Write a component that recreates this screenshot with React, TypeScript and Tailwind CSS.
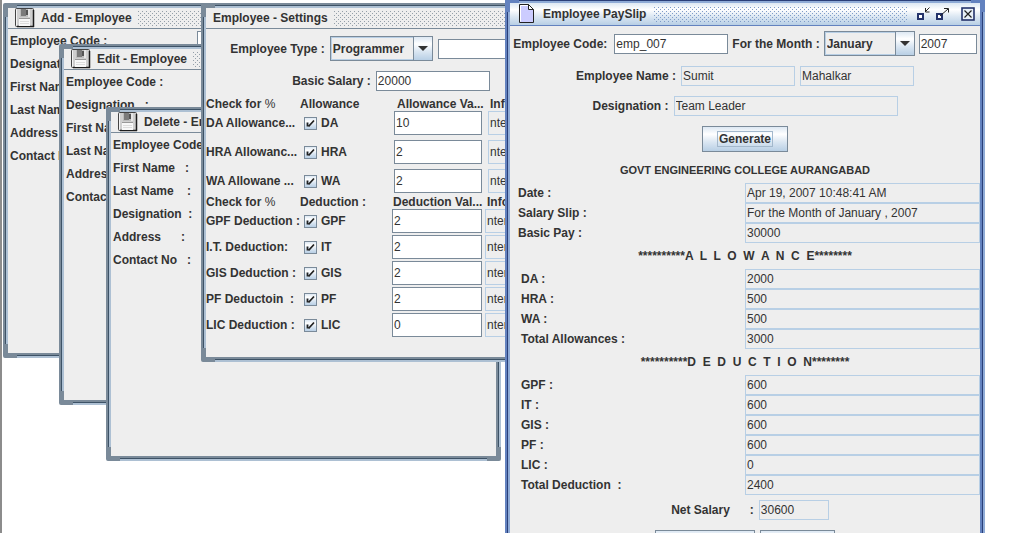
import { ReactNode, useId } from 'react';
import clsx from 'clsx';

interface FrameProps {
  title: string;
  className: string;
  active?: boolean;
  icon?: ReactNode;
  children: ReactNode;
}

const allowances = [
  { label: 'DA Allowance...', name: 'DA', value: '10' },
  { label: 'HRA Allowanc...', name: 'HRA', value: '2' },
  { label: 'WA Allowane ...', name: 'WA', value: '2' },
];

const deductions = [
  { label: 'GPF Deduction :', name: 'GPF', value: '2' },
  { label: 'I.T. Deduction:', name: 'IT', value: '2' },
  { label: 'GIS Deduction :', name: 'GIS', value: '2' },
  { label: 'PF Deductoin  :', name: 'PF', value: '2' },
  { label: 'LIC Deduction :', name: 'LIC', value: '0' },
];

const slipHeader = [
  ['Date :', 'Apr 19, 2007 10:48:41 AM'],
  ['Salary Slip :', 'For the Month of January , 2007'],
  ['Basic Pay :', '30000'],
];

const slipAllowances = [
  ['DA :', '2000'],
  ['HRA :', '500'],
  ['WA :', '500'],
  ['Total Allowances :', '3000'],
];

const slipDeductions = [
  ['GPF :', '600'],
  ['IT :', '600'],
  ['GIS :', '600'],
  ['PF :', '600'],
  ['LIC :', '0'],
  ['Total Deduction  :', '2400'],
];

const fieldStyle = 'border border-[#7a8a99] bg-white px-px font-normal';
const lockedStyle = 'border border-[#b8cfe5] bg-[#eeeeee] px-px font-normal';
const oceanFill = 'bg-[linear-gradient(#dde8f3,#ffffff_30%,#dde8f3_60%,#b8cfe5)]';

function FloppyIcon() {
  return (
    <svg width="20" height="20" viewBox="0 0 20 20">
      <rect x="0.5" y="0.5" width="18" height="18" rx="1" fill="#cfcfcf" stroke="#444" />
      <path d="M1.500 1.500v16" stroke="#f4f4f4" />
      <path d="M18.500 2v17M2 18.500h17" stroke="#1c1c1c" strokeWidth="1.500" />
      <rect x="5" y="1" width="10" height="8" fill="#bcbcbc" />
      <rect x="6" y="1" width="5" height="7" fill="#7b7b7b" />
      <rect x="11" y="2" width="2" height="5" fill="#555" />
      <rect x="13" y="1" width="2" height="8" fill="#e6e6e6" />
      <rect x="4" y="11" width="11" height="7" fill="#f8f8f8" />
      <path d="M4 10.500h11" stroke="#999" />
      <path d="M5 13.500h9M5 15.500h9" stroke="#ddd" />
    </svg>
  );
}

function PageIcon() {
  return (
    <svg width="16" height="20" viewBox="0 0 16 20">
      <path d="M0.500 0.500h9l5 5v13h-14z" fill="#ccccff" stroke="#222" />
      <path d="M1.500 17.500v-16h8" fill="none" stroke="#fff" />
      <path d="M9.500 0.500v5h5z" fill="#fff" stroke="#222" />
    </svg>
  );
}

// Metal frame edge: a dark and a light line running between the corners
function FrameEdges({ active }: { active?: boolean }) {
  const tone = active ? 'border-t-[#2a3f78] border-b-[#8fabd6]' : 'border-t-[#3d5266] border-b-[#adc0d3]';
  const sideTone = active ? 'border-l-[#2a3f78] border-r-[#8fabd6]' : 'border-l-[#3d5266] border-r-[#adc0d3]';
  return (
    <>
      <span className={clsx('absolute inset-x-[9px] -top-[3px] h-[3px] border-t border-b-2', tone)} />
      <span className={clsx('absolute inset-x-[9px] -bottom-[5px] h-[3px] border-t border-b-2', tone)} />
      <span className={clsx('absolute inset-y-[9px] -left-[3px] w-[3px] border-l border-r-2', sideTone)} />
      <span className={clsx('absolute inset-y-[9px] -right-[5px] w-[3px] border-l border-r-2', sideTone)} />
    </>
  );
}

function Frame({ title, className, active, icon, children }: FrameProps) {
  return (
    <section
      className={clsx(
        'absolute flex flex-col rounded-[2px] border-[5px] bg-[#eeeeee]',
        active ? 'border-[#6382bf]' : 'border-[#7a8a99]',
        className
      )}
    >
      <FrameEdges active={active} />
      <header
        className={clsx(
          'flex shrink-0 items-center border-b',
          active
            ? 'h-[23px] gap-2 border-[#6382bf] pr-[5px] pl-[9px]'
            : 'h-[21px] gap-[6px] border-[#7a8a99] pl-[7px]',
          active && oceanFill
        )}
      >
        {icon}
        <h2 className="whitespace-nowrap text-[12px] font-bold">{title}</h2>
        <div
          className={clsx(
            'h-[15px] flex-1 bg-size-[4px_4px] bg-position-[0_0,2px_2px]',
            active
              ? 'bg-[conic-gradient(from_270deg_at_1px_1px,#7f9cc8_90deg,transparent_0),conic-gradient(from_270deg_at_1px_1px,#7f9cc8_90deg,transparent_0)]'
              : 'bg-[conic-gradient(from_270deg_at_1px_1px,#949fa9_90deg,transparent_0),conic-gradient(from_270deg_at_1px_1px,#949fa9_90deg,transparent_0)]'
          )}
        />
        {active && <FrameButtons />}
      </header>
      {children}
    </section>
  );
}

function FrameButtons() {
  return (
    <div className="flex items-center gap-1">
      <button type="button" aria-label="Minimize">
        <svg width="16" height="16" viewBox="0 0 16 16" fill="none">
          <rect x="3" y="8" width="5" height="5" fill="#fff" stroke="#24336b" strokeWidth="2" />
          <path d="M14.500 1.500l-4 4M10.500 2v4h4" stroke="#222" />
        </svg>
      </button>
      <button type="button" aria-label="Maximize">
        <svg width="16" height="16" viewBox="0 0 16 16" fill="none">
          <rect x="2" y="8" width="5" height="5" fill="#fff" stroke="#24336b" strokeWidth="2" />
          <path d="M5 10l8-7M9 2.500h4.500v4" stroke="#222" />
        </svg>
      </button>
      <button type="button" aria-label="Close" className="ml-[6px]">
        <svg width="14" height="14" viewBox="0 0 14 14" fill="none">
          <rect x="1" y="1" width="12" height="12" fill="#e8f0f8" stroke="#24336b" strokeWidth="1.600" />
          <path d="M3.500 3.500l7 7M10.500 3.500l-7 7" stroke="#222" strokeWidth="1.200" />
        </svg>
      </button>
    </div>
  );
}

function EmployeeForm({ labels }: { labels: string[] }) {
  const id = useId();
  return (
    <form className="flex flex-col pl-[2px]">
      {labels.map((label, i) => (
        <div key={label} className="flex h-[23px] items-center">
          <label htmlFor={`${id}-${i}`} className="w-[187px] shrink-0 whitespace-pre">
            {label}
          </label>
          <input id={`${id}-${i}`} className={clsx(fieldStyle, 'h-[20px] w-[114px]')} />
        </div>
      ))}
    </form>
  );
}

function Combo({ id, value, className }: { id: string; value: string; className: string }) {
  return (
    <div className={clsx('grid h-[25px] grid-cols-[1fr_19px] border border-[#7a8a99]', className)}>
      <select
        id={id}
        defaultValue={value}
        className="col-span-2 col-start-1 row-start-1 appearance-none border border-[#b8cfe5] bg-[#eeeeee] pl-px font-bold outline-none"
      >
        <option>{value}</option>
      </select>
      <span
        className={clsx(
          'pointer-events-none col-start-2 row-start-1 flex items-center justify-center border-l border-[#7a8a99]',
          oceanFill
        )}
      >
        <svg width="10" height="5" viewBox="0 0 10 5">
          <path d="M0 0h10L5 5z" fill="#333" />
        </svg>
      </span>
    </div>
  );
}

interface RateTableProps {
  rows: { label: string; name: string; value: string }[];
  heading: string;
  valueHeading: string;
  wide?: boolean;
}

function RateTable({ rows, heading, valueHeading, wide }: RateTableProps) {
  return (
    <table className="w-full table-fixed border-collapse text-left">
      <colgroup>
        <col className="w-[94px]" />
        <col className={wide ? 'w-[94px]' : 'w-[92px]'} />
        <col className={wide ? 'w-[94px]' : 'w-[93px]'} />
        <col />
      </colgroup>
      <thead>
        <tr className="h-[14px] leading-[14px] whitespace-nowrap">
          <th>
            Check for <span className="font-normal">%</span>
          </th>
          <th>{heading}</th>
          <th className={wide ? 'pl-[3px]' : 'pl-px'}>{valueHeading}</th>
          <th className="pl-[2px]">Information</th>
        </tr>
      </thead>
      <tbody>
        {rows.map((row) => (
          <tr key={row.name} className={clsx('align-top leading-[24px]', wide ? 'h-[29px] last:h-[26px]' : 'h-[26px]')}>
            <th className="overflow-hidden whitespace-pre">{row.label}</th>
            <td>
              <label className="flex items-center gap-1 pl-1 font-bold">
                <input type="checkbox" defaultChecked className="peer sr-only" />
                <span className={clsx('flex size-[13px] items-center justify-center border border-[#7a8a99]', oceanFill)}>
                  <svg width="9" height="9" viewBox="0 0 9 9" fill="none">
                    <path d="M1.500 3.500v4M2.500 7.500L8 1.500" stroke="#222" strokeWidth="1.800" />
                  </svg>
                </span>
                {row.name}
              </label>
            </td>
            <td>
              <input
                aria-label={`${row.name} value`}
                defaultValue={row.value}
                className={clsx(fieldStyle, 'block h-[24px]', wide ? 'w-[88px]' : 'w-[90px]')}
              />
            </td>
            <td>
              <input
                aria-label={`${row.name} information`}
                readOnly
                value="nter value"
                className={clsx(lockedStyle, 'block h-[24px] w-full')}
              />
            </td>
          </tr>
        ))}
      </tbody>
    </table>
  );
}

function SlipRows({ rows, className }: { rows: string[][]; className: string }) {
  const id = useId();
  return (
    <div className="flex flex-col">
      {rows.map(([label, value], i) => (
        <div key={label} className={clsx('flex h-5 items-center', className)}>
          <label htmlFor={`${id}-${i}`} className="flex-1 whitespace-pre">
            {label}
          </label>
          <input id={`${id}-${i}`} readOnly value={value} className={clsx(lockedStyle, 'h-5 w-[235px]')} />
        </div>
      ))}
    </div>
  );
}

function SlipTitle({ children }: { children: ReactNode }) {
  return <h3 className="flex h-[26px] items-center justify-center font-bold whitespace-pre">{children}</h3>;
}

function SettingsFrame() {
  return (
    <Frame title="Employee - Settings" className="top-[3px] left-[201px] h-[359px] w-[380px]">
      <div className="flex items-center justify-center gap-[5px] pt-[7px]">
        <label htmlFor="type">Employee Type :</label>
        <Combo id="type" value="Programmer" className="w-[103px]" />
        <input aria-label="New type" className={clsx(fieldStyle, 'h-[20px] w-[114px]')} />
      </div>
      <div className="flex items-center justify-center gap-[5px] pt-[10px] pb-[6px]">
        <label htmlFor="basic">Basic Salary :</label>
        <input id="basic" defaultValue="20000" className={clsx(fieldStyle, 'h-[20px] w-[114px]')} />
      </div>
      <RateTable rows={allowances} heading="Allowance" valueHeading="Allowance Va..." wide />
      <RateTable rows={deductions} heading="Deduction :" valueHeading="Deduction Val..." />
    </Frame>
  );
}

function PaySlipFrame() {
  return (
    <Frame title="Employee PaySlip" className="-top-[2px] left-[505px] w-[480px]" active icon={<PageIcon />}>
      <div className="flex items-center justify-center gap-1 pt-[5px]">
        <label htmlFor="code" className="mr-[3px]">Employee Code:</label>
        <input id="code" defaultValue="emp_007" className={clsx(fieldStyle, 'h-[20px] w-[114px]')} />
        <label htmlFor="month">For the Month :</label>
        <Combo id="month" value="January" className="w-[91px]" />
        <input aria-label="Year" defaultValue="2007" className={clsx(fieldStyle, 'h-[20px] w-[58px]')} />
      </div>
      <div className="flex items-center justify-center gap-[5px] pt-[10px]">
        <label htmlFor="first">Employee Name :</label>
        <input id="first" readOnly value="Sumit" className={clsx(lockedStyle, 'h-[20px] w-[114px]')} />
        <input aria-label="Last name" readOnly value="Mahalkar" className={clsx(lockedStyle, 'h-[20px] w-[114px]')} />
      </div>
      <div className="flex items-center justify-center gap-[5px] pt-[10px]">
        <label htmlFor="designation">Designation :</label>
        <input id="designation" readOnly value="Team Leader" className={clsx(lockedStyle, 'h-[20px] w-[224px]')} />
      </div>
      <div className="flex justify-center pt-[10px]">
        <button type="button" className={clsx('h-[26px] border border-[#7a8a99] px-[14px] font-bold', oceanFill)}>
          <span className="border border-[#a3b8cc] px-px">Generate</span>
        </button>
      </div>
      <h3 className="flex h-[31px] items-center justify-center pt-[5px] text-[11px] font-bold">
        GOVT ENGINEERING COLLEGE AURANGABAD
      </h3>
      <SlipRows rows={slipHeader} className="pl-2" />
      <SlipTitle>{'**********A  L  L  O  W  A  N  C  E********'}</SlipTitle>
      <SlipRows rows={slipAllowances} className="pl-[11px]" />
      <SlipTitle>{'**********D  E  D  U  C  T  I  O  N********'}</SlipTitle>
      <SlipRows rows={slipDeductions} className="pl-[11px]" />
      <div className="flex items-center justify-center gap-[5px] pt-[5px] pl-[10px]">
        <label htmlFor="net" className="whitespace-pre">{'Net Salary      :'}</label>
        <input id="net" readOnly value="30600" className={clsx(lockedStyle, 'h-[20px] w-[70px]')} />
      </div>
      <div className="flex justify-center gap-[5px] pt-[10px] pb-[5px]">
        <button type="button" aria-label="Print" className={clsx('h-[26px] w-[100px] border border-[#7a8a99]', oceanFill)} />
        <button type="button" aria-label="Close" className={clsx('h-[26px] w-[75px] border border-[#7a8a99]', oceanFill)} />
      </div>
    </Frame>
  );
}

export default function App() {
  return (
    <main className="relative h-screen overflow-hidden border-l-2 border-l-[#8c8c8c] bg-white font-['Liberation_Sans',Arial,sans-serif] text-[12px] leading-[16px] font-bold text-[#333333]">
      <div className="absolute top-0 -left-[2px] size-full">
        <Frame title="Add - Employee" className="top-[3px] left-[3px] h-[355px] w-[387px]" icon={<FloppyIcon />}>
          <EmployeeForm
            labels={['Employee Code :', 'Designation   :', 'First Name    :', 'Last Name    :', 'Address      :', 'Contact No   :']}
          />
        </Frame>
        <Frame title="Edit - Employee" className="top-[44px] left-[59px] h-[361px] w-[392px]" icon={<FloppyIcon />}>
          <EmployeeForm
            labels={['Employee Code :', 'Designation   :', 'First Name    :', 'Last Name    :', 'Address      :', 'Contact No   :']}
          />
        </Frame>
        <Frame title="Delete - Employee" className="top-[107px] left-[106px] h-[354px] w-[395px]" icon={<FloppyIcon />}>
          <EmployeeForm
            labels={['Employee Code :', 'First Name   :', 'Last Name    :', 'Designation  :', 'Address      :', 'Contact No   :']}
          />
        </Frame>
        <SettingsFrame />
        <PaySlipFrame />
      </div>
    </main>
  );
}
